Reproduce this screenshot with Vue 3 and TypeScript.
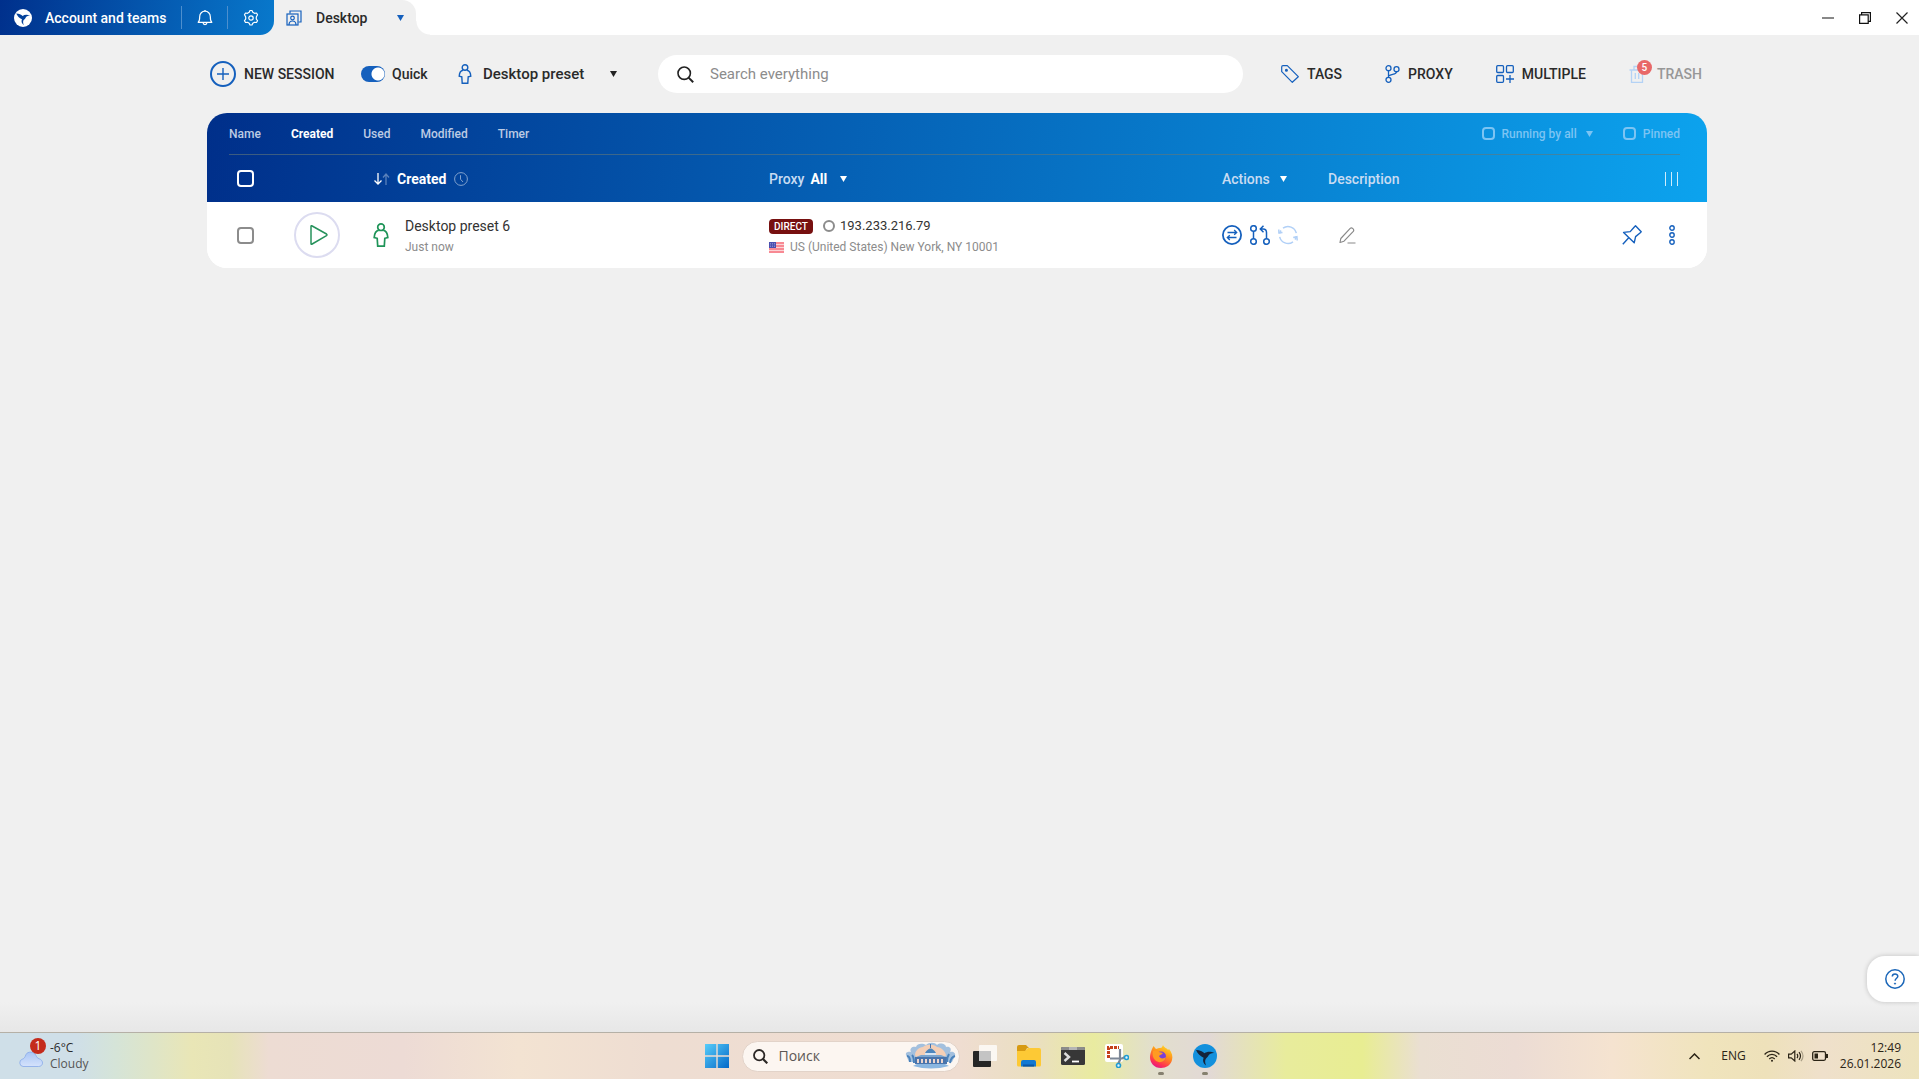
<script setup lang="ts">
import { ref } from 'vue'

interface Session {
  id: number
  name: string
  when: string
  kind: string
  ip: string
  place: string
}

const sorts = ['Name', 'Created', 'Used', 'Modified', 'Timer']
const activeSort = ref('Created')
const quick = ref(true)
const query = ref('')
const preset = ref('Desktop preset')
const proxyFilter = ref('All')
const sessions: Session[] = [
  {
    id: 6,
    name: 'Desktop preset 6',
    when: 'Just now',
    kind: 'DIRECT',
    ip: '193.233.216.79',
    place: 'US (United States) New York, NY 10001',
  },
]
</script>

<template>
  <div class="app">
    <header class="titlebar">
      <div class="account">
        <button class="team" type="button">
          <svg width="18" height="18" viewBox="0 0 24 24">
            <circle cx="12" cy="12" r="12" fill="#fff" />
            <path d="M3 6c4 .2 6.500 1.200 8.500 3.200C14 7.500 17.500 7 21.500 9c-3-.2-5 .6-6 2.600-.8 2-2.700 2.400-3.200 4.400-.4 2 0 3.500.8 5.500-2.800-2-3.800-4.800-2.500-7.800C7 12 4.500 9.500 3 6z" fill="#04429c" />
          </svg>
          <span>Account and teams</span>
        </button>
        <button class="tool" type="button" aria-label="Notifications">
          <svg width="16" height="18" viewBox="0 0 16 18" fill="none" stroke="#fff" stroke-width="1.2">
            <path d="M1.2 13.3C2.8 12 2.700 10.500 2.700 7.500a5.300 5.300 0 0 1 10.600 0c0 3 0 4.500 1.500 5.800z" stroke-linejoin="round" />
            <path d="M6 13.500c.2 2.700 3.800 2.700 4 0M8 1v1.200" />
          </svg>
        </button>
        <button class="tool" type="button" aria-label="Settings">
          <svg width="16" height="18" viewBox="0 0 16 18" fill="none" stroke="#fff" stroke-width="1.2" stroke-linejoin="round">
            <path d="M6.200 3.300 7 1.500h2l.8 1.800 1.700 1 2-.3 1 1.800L13.300 8v2l1.200 1.700-1 1.800-2-.2-1.700 1L9 16H7l-.8-1.700-1.700-1-2 .2-1-1.800L2.700 10V8L1.500 5.800l1-1.800 2 .3z" />
            <circle cx="8" cy="9" r="2.2" />
          </svg>
        </button>
      </div>
      <button class="tab" type="button">
        <svg width="16" height="16" viewBox="0 0 16 16" fill="none" stroke="#1560bd" stroke-width="1.2">
          <path d="M4 3.500V1h11v11h-2.500" />
          <rect x="1" y="4" width="11" height="11" />
          <circle cx="6.500" cy="8" r="1.800" />
          <path d="M3 15c0-2.500 1.200-4 3.500-4s3.500 1.500 3.500 4" />
        </svg>
        <span class="tab-name">Desktop</span>
        <svg class="caret" width="7" height="6" viewBox="0 0 7 6"><path d="M0 0h7L3.500 6z" fill="#1560bd" /></svg>
      </button>
      <div class="windowbar">
        <button type="button" aria-label="Minimize">
          <svg width="12" height="12" viewBox="0 0 12 12"><path d="M0 6h12" stroke="#888" stroke-width="2" /></svg>
        </button>
        <button type="button" aria-label="Restore">
          <svg width="12" height="12" viewBox="0 0 12 12" fill="none" stroke="#111" stroke-width="1.2"><path d="M.6 2.800h8.600v8.600H.6zM2.600 2.800V.6h8.800v8.800H9.200" /></svg>
        </button>
        <button type="button" aria-label="Close">
          <svg width="12" height="12" viewBox="0 0 12 12" stroke="#222" stroke-width="1.2"><path d="M.5.5l11 11M11.500.5l-11 11" /></svg>
        </button>
      </div>
    </header>

    <main>
      <div class="content">
        <div class="toolbar">
          <button class="new" type="button">
            <svg width="26" height="26" viewBox="0 0 26 26" fill="none" stroke="#1560bd">
              <circle cx="13" cy="13" r="12" stroke-width="2" />
              <path d="M13 7v12M7 13h12" stroke-width="1.4" />
            </svg>
            <span>NEW SESSION</span>
          </button>
          <label class="quick">
            <input v-model="quick" type="checkbox" role="switch" />
            <span>Quick</span>
          </label>
          <label class="preset">
            <svg width="14" height="20" viewBox="0 0 14 20" fill="none" stroke="#1560bd" stroke-width="1.4">
              <circle cx="7" cy="3.500" r="2.800" />
              <path d="M5 6.300C2.600 6.800 1.400 8.500 1.200 12.200l2.600.6.4 6.400h5.600l.4-6.400 2.600-.6C12.600 8.500 11.400 6.800 9 6.300" />
            </svg>
            <select v-model="preset" aria-label="Preset">
              <option>Desktop preset</option>
            </select>
            <svg class="caret" width="7" height="6" viewBox="0 0 7 6"><path d="M0 0h7L3.500 6z" fill="#222" /></svg>
          </label>
          <label class="search">
            <svg width="17" height="17" viewBox="0 0 17 17" fill="none" stroke="#222" stroke-width="1.600">
              <circle cx="7.200" cy="7.200" r="6.200" />
              <path d="M11.600 11.600l4.600 4.600" stroke-width="2" />
            </svg>
            <input v-model="query" type="text" placeholder="Search everything" aria-label="Search everything" />
          </label>
          <nav class="links">
            <button type="button">
              <svg width="18" height="18" viewBox="0 0 18 18" fill="none" stroke="#1560bd" stroke-width="1.2" stroke-linejoin="round">
                <path d="M.7 4V2Q.7.7 2 .7h4.300l11 11-6 5.600L.7 6.700z" />
                <circle cx="5.400" cy="5.200" r=".9" fill="#1560bd" />
              </svg>
              <span>TAGS</span>
            </button>
            <button type="button">
              <svg width="15" height="18" viewBox="0 0 15 18" fill="none" stroke="#1560bd" stroke-width="1.3">
                <circle cx="3.500" cy="3.200" r="2.500" />
                <circle cx="11.500" cy="4.200" r="2.500" />
                <circle cx="3.500" cy="14.800" r="2.500" />
                <path d="M3.500 5.700v6.600M11.500 6.700c0 3-4.500 2.200-8 4.300" />
              </svg>
              <span>PROXY</span>
            </button>
            <button type="button">
              <svg width="18" height="18" viewBox="0 0 18 18" fill="none" stroke="#1560bd" stroke-width="1.3">
                <rect x=".7" y=".7" width="6.800" height="6.800" rx="1" />
                <rect x="10.500" y=".7" width="6.800" height="6.800" rx="1" />
                <rect x=".7" y="10.500" width="6.800" height="6.800" rx="1" />
                <path d="M14 10v8M10 14h8" />
              </svg>
              <span>MULTIPLE</span>
            </button>
            <button class="trash" type="button">
              <span class="bin">
                <svg width="16" height="18" viewBox="0 0 16 18" fill="none" stroke="#b4d2f5" stroke-width="1.3">
                  <path d="M.5 5h15M2.500 5v12.300h11V5M5 5V1.500h6V5M6.300 8v6M9.700 8v6" />
                </svg>
                <span class="badge">5</span>
              </span>
              <span>TRASH</span>
            </button>
          </nav>
        </div>

        <section class="card">
          <div class="filters">
            <div class="sorts">
              <button
                v-for="s in sorts"
                :key="s"
                type="button"
                :class="{ on: s === activeSort }"
                @click="activeSort = s"
              >{{ s }}</button>
            </div>
            <div class="flags">
              <label><input type="checkbox" /><span>Running by all</span>
                <svg class="caret" width="7" height="6" viewBox="0 0 7 6"><path d="M0 0h7L3.500 6z" fill="currentColor" /></svg>
              </label>
              <label><input type="checkbox" /><span>Pinned</span></label>
            </div>
          </div>

          <table>
            <colgroup>
              <col class="c-check" /><col class="c-play" /><col class="c-name" />
              <col class="c-proxy" /><col class="c-act" /><col /><col class="c-tail" />
            </colgroup>
            <thead>
              <tr>
                <th class="center"><input class="box" type="checkbox" aria-label="Select all" /></th>
                <th></th>
                <th>
                  <button class="line sort" type="button">
                    <svg width="18" height="12" viewBox="0 0 18 12" fill="none" stroke="#fff" stroke-width="1.3">
                      <path d="M5 0v11M1.500 7.500 5 11l3.500-3.500" />
                      <path d="M13 12V1M10 4.500 13 1l3 3.500" opacity=".35" />
                    </svg>
                    <b>Created</b>
                    <svg class="clock-icon" width="14" height="14" viewBox="0 0 14 14" fill="none" stroke="#fff" opacity=".5">
                      <circle cx="7" cy="7" r="6.400" />
                      <path d="M6.500 3.200V7.200l2.500 2.800" />
                    </svg>
                  </button>
                </th>
                <th>
                  <label class="line proxy">
                    <span>Proxy</span>
                    <select v-model="proxyFilter"><option>All</option></select>
                    <svg class="caret" width="7" height="6" viewBox="0 0 7 6"><path d="M0 0h7L3.500 6z" fill="#fff" /></svg>
                  </label>
                </th>
                <th>
                  <button class="line acts" type="button">
                    <span>Actions</span>
                    <svg class="caret" width="7" height="6" viewBox="0 0 7 6"><path d="M0 0h7L3.500 6z" fill="#fff" /></svg>
                  </button>
                </th>
                <th>Description</th>
                <th class="tail">
                  <button type="button" aria-label="Columns">
                    <svg width="14" height="14" viewBox="0 0 14 14" stroke="#fff" opacity=".8"><path d="M.5 0v14M6.500 0v14M12.500 0v14" /></svg>
                  </button>
                </th>
              </tr>
            </thead>
            <tbody>
              <tr v-for="row in sessions" :key="row.id">
                <td class="center"><input class="box" type="checkbox" :aria-label="'Select ' + row.name" /></td>
                <td>
                  <button class="play" type="button" aria-label="Start">
                    <svg width="18" height="20" viewBox="0 0 18 20" fill="none" stroke="#27925c" stroke-width="1.500" stroke-linejoin="round">
                      <path d="M1 1.500Q1 .3 2.200 1l14.300 8q1 .8 0 1.600L2.200 19Q1 19.700 1 18.500z" />
                    </svg>
                  </button>
                </td>
                <td>
                  <div class="who">
                    <svg width="16" height="24" viewBox="0 0 16 24" fill="none" stroke="#1e9458" stroke-width="1.700">
                      <circle cx="8" cy="4.200" r="3.300" />
                      <path d="M5.800 7.200C3 7.800 1.500 10 1.200 14.500l3 .8.500 7.800h6.600l.5-7.800 3-.8C14.500 10 13 7.800 10.200 7.200" />
                    </svg>
                    <div class="stack">
                      <span class="main">{{ row.name }}</span>
                      <span class="sub">{{ row.when }}</span>
                    </div>
                  </div>
                </td>
                <td>
                  <div class="stack">
                    <span class="main ip"><span class="kind">{{ row.kind }}</span><i class="ring"></i><span>{{ row.ip }}</span></span>
                    <span class="sub place">
                      <svg width="15" height="11" viewBox="0 0 15 11">
                        <rect width="15" height="11" fill="#fbd3d6" />
                        <path d="M0 1h15M0 4h15M0 7h15M0 10h15" stroke="#f8717e" stroke-width="1.500" />
                        <rect width="7" height="6" fill="#4a4fb0" />
                        <path d="M1 1.500h5M1 3h5M1 4.500h5" stroke="#a9abdf" stroke-width=".6" stroke-dasharray="1 1" />
                      </svg>
                      <span>{{ row.place }}</span>
                    </span>
                  </div>
                </td>
                <td>
                  <div class="icons">
                    <button type="button" aria-label="Change proxy">
                      <svg width="20" height="20" viewBox="0 0 20 20" fill="none" stroke="#1560bd" stroke-width="1.3">
                        <circle cx="10" cy="10" r="9.100" stroke-width="1.800" />
                        <path d="M5.500 7.500h9M12.200 5l2.500 2.500-2.500 2.300M14.500 12.500h-9M7.800 10.200l-2.500 2.300L7.800 15" />
                      </svg>
                    </button>
                    <button type="button" aria-label="Check proxy">
                      <svg width="20" height="20" viewBox="0 0 20 20" fill="none" stroke="#1560bd" stroke-width="1.500">
                        <circle cx="3.500" cy="3.500" r="2.800" />
                        <circle cx="3.500" cy="16.500" r="2.800" />
                        <circle cx="16.500" cy="16.500" r="2.800" />
                        <path d="M3.500 6.300v7.400M16.500 13.700V7.500q0-3.500-3.500-3.500h-2M13.500.8 10.300 4l3.200 3.200" />
                      </svg>
                    </button>
                    <button type="button" aria-label="Refresh" disabled>
                      <svg width="20" height="20" viewBox="0 0 20 20" fill="none" stroke="#b1d0f7" stroke-width="1.500">
                        <path d="M5 3.200a8.500 8.500 0 0 1 13.300 5M15 16.800A8.500 8.500 0 0 1 1.700 11.800" />
                        <path d="M.8 4.500.9 8l3.600-.5M19.200 15.500l-.3-3.800-3.700.8" />
                        <path d="M1.600 8.500a8.500 8.500 0 0 1 1.500-3M18.400 11.500a8.500 8.500 0 0 1-1.500 3" />
                      </svg>
                    </button>
                  </div>
                </td>
                <td>
                  <button class="edit" type="button" aria-label="Edit description">
                    <svg width="17" height="17" viewBox="0 0 17 17" fill="none" stroke="#8a8a8a" stroke-width="1.2" stroke-linejoin="round">
                      <path d="M1 15.500l.8-4L11.200 1.400q1.200-1 2.700.2 1.400 1.400.4 2.800L5 14.200zM8.500 16h8" />
                    </svg>
                  </button>
                </td>
                <td class="tail">
                  <div class="tailbox">
                    <button type="button" aria-label="Pin">
                      <svg width="20" height="20" viewBox="0 0 20 20" fill="none" stroke="#1560bd" stroke-width="1.4" stroke-linejoin="round">
                        <path d="M13.500.8l5.700 6-1.200 1.200-4.400 3.600-1.400 6.200L1.600 7.400l6.600-.8 3.900-4.400zM6.500 13 .8 19.200" />
                      </svg>
                    </button>
                    <button type="button" aria-label="More">
                      <svg width="6" height="20" viewBox="0 0 6 20" fill="none" stroke="#1560bd" stroke-width="1.4">
                        <circle cx="3" cy="3" r="2.200" /><circle cx="3" cy="10" r="2.200" /><circle cx="3" cy="17" r="2.200" />
                      </svg>
                    </button>
                  </div>
                </td>
              </tr>
            </tbody>
          </table>
        </section>
      </div>
      <button class="help" type="button" aria-label="Help">
        <svg width="20" height="20" viewBox="0 0 20 20" fill="none" stroke="#1a66b8" stroke-width="1.500">
          <circle cx="10" cy="10" r="9.200" />
          <path d="M7.300 7.600c0-3.600 5.500-3.400 5.500-.3 0 2-2.700 2-2.700 4.500" />
          <circle cx="10" cy="14.600" r=".6" fill="#1a66b8" stroke-width="1" />
        </svg>
      </button>
    </main>

    <footer class="taskbar">
      <div class="weather">
        <span class="cloud">
          <svg width="24" height="16" viewBox="0 0 24 16">
            <defs>
              <linearGradient id="cl" x1="0" y1="0" x2="0" y2="1"><stop offset="0" stop-color="#a9c6f6" /><stop offset="1" stop-color="#d5e2fb" /></linearGradient>
            </defs>
            <path d="M4 15.500a3.800 3.800 0 0 1-.5-7.400C5 7.500 6 6.500 7 3.500 8.500.3 15 0 17 4.500c.8 2 1.500 2.500 3 3.200 5 1.500 4.500 7.800-.5 7.800z" fill="url(#cl)" stroke="#86a8e8" stroke-width=".8" />
          </svg>
          <span class="alert">1</span>
        </span>
        <div class="temp"><span>-6°C</span><span class="cond">Cloudy</span></div>
      </div>

      <div class="dock">
        <button type="button" aria-label="Start">
          <svg width="24" height="24" viewBox="0 0 24 24">
            <defs>
              <linearGradient id="win" x1="0" y1="0" x2="1" y2="1"><stop offset="0" stop-color="#57cdfa" /><stop offset="1" stop-color="#0468c8" /></linearGradient>
            </defs>
            <path d="M0 0h11.300v11.300H0zM12.700 0H24v11.300H12.700zM0 12.700h11.300V24H0zM12.700 12.700H24V24H12.700z" fill="url(#win)" />
          </svg>
        </button>
        <label class="find">
          <svg width="15" height="15" viewBox="0 0 15 15" fill="none" stroke="#2b2725" stroke-width="1.800">
            <circle cx="6.200" cy="6.200" r="5.200" /><path d="M10 10l4.300 4.300" stroke-width="2.200" />
          </svg>
          <input type="text" placeholder="Поиск" aria-label="Поиск" />
          <svg width="52" height="28" viewBox="0 0 52 28">
            <path d="M1 13C0 10 4 9 6 10c-2-4 2-6 5-5 1-4 7-4 10-2 3-3 9-3 11 0 3-3 9-1 9 2 4-1 6 2 4 5 3-1 6 1 5 4l-3 6H4z" fill="#a3c0de" />
            <path d="M10 13c0-4 4-8 8-8 3-3 11-3 14 0 4 0 8 4 9 8l-3 6H13z" fill="#f4cfb6" />
            <path d="M20 11q5.500-9 11 0z" fill="#4d86bd" />
            <path d="M25 2h1v4h-1zM10 15h32v7H10z" fill="#4a74ab" />
            <path d="M20 11h11v3H20z" fill="#d8e6f4" />
            <path d="M12 19h28" stroke="#ecd5cd" stroke-width="4" stroke-dasharray="2 2" />
            <path d="M16 13l-5 2h30l-5-2z" fill="#7aa4ce" />
            <path d="M12 22h28l4 2q-18 5-36 0z" fill="#8ab6e0" />
            <path d="M2 14q3 0 3 6M7 13q2 2 2 8M50 14q-4 1-5 7M44 12q-2 3-2 8" stroke="#4a82bb" stroke-width="2" fill="none" />
          </svg>
        </label>
        <button type="button" aria-label="Task view">
          <svg width="24" height="24" viewBox="0 0 24 24">
            <rect x="0" y="7" width="18" height="16" rx="1" fill="#262626" />
            <rect x="6" y="1" width="18" height="16" rx="1" fill="#fff" opacity=".75" />
            <rect x="6" y="7" width="12" height="10" fill="#c4c4c4" />
          </svg>
        </button>
        <button type="button" aria-label="File Explorer">
          <svg width="24" height="24" viewBox="0 0 24 24">
            <path d="M0 3q0-2 2-2h7l3 3h-2L8 8H0z" fill="#d79a12" />
            <path d="M0 7h8l3-3h11q2 0 2 2v15q0 1.500-1.500 1.500h-21Q0 22.500 0 21z" fill="#fdc935" />
            <path d="M4 22.500V18q0-2 2-2h11q2 0 2 2v4.500z" fill="#1279d2" />
            <path d="M6 22.500v-2h11v2z" fill="#0a57a6" />
          </svg>
        </button>
        <button type="button" aria-label="Terminal">
          <svg width="24" height="24" viewBox="0 0 24 24">
            <rect y="3" width="24" height="18" rx="1.500" fill="#373737" />
            <path d="M0 6V4.500Q0 3 1.500 3H22.500Q24 3 24 4.500V6z" fill="#8c8c8c" />
            <path d="M8 3h8v3H8z" fill="#b5b5b5" />
            <path d="M3.500 9l4.500 4-4.500 4" fill="none" stroke="#ddd" stroke-width="2.400" />
            <path d="M11 17.500h7" stroke="#fff" stroke-width="1.800" />
          </svg>
        </button>
        <button type="button" aria-label="Snipping Tool">
          <svg width="24" height="24" viewBox="0 0 24 24">
            <rect width="18" height="18" rx="2" fill="#fff" />
            <path d="M3.500 14V3.500H14" fill="none" stroke="#c5411b" stroke-width="3" stroke-dasharray="3 1" />
            <path d="M15 5v11l-2 4M5 14.500h12l4-2" fill="none" stroke="#7c8797" stroke-width="2.200" />
            <circle cx="13.500" cy="21.500" r="2" fill="#dff3fc" stroke="#219cd2" stroke-width="1.600" />
            <circle cx="21.500" cy="13.500" r="2" fill="#dff3fc" stroke="#219cd2" stroke-width="1.600" />
          </svg>
        </button>
        <button class="running" type="button" aria-label="Firefox">
          <svg width="24" height="24" viewBox="0 0 24 24">
            <defs>
              <linearGradient id="ff" x1=".8" y1="0" x2=".3" y2="1"><stop offset="0" stop-color="#ffe226" /><stop offset=".45" stop-color="#ff8a1c" /><stop offset=".8" stop-color="#ff3350" /><stop offset="1" stop-color="#e31587" /></linearGradient>
            </defs>
            <path d="M3 5l1.500-3L7 5l3-1c2 0 3 0 4-3 1 3 4 3 5 5l1-1c3 4 4 7 3 11-1 5-6 8-11 8C5 24 1 19 1 13c0-3 1-5 2-8z" fill="url(#ff)" />
            <circle cx="12" cy="12.500" r="5" fill="#7a3fd8" />
            <path d="M4 7c3-1 5 0 6 1l4 1c-1 2-3 1.500-4 3 1 3 5 3 7 1-1 5-7 7-11 3-2-2-3-5-2-9z" fill="#ff9a22" />
          </svg>
        </button>
        <button class="running" type="button" aria-label="Browser">
          <svg width="24" height="24" viewBox="0 0 24 24">
            <circle cx="12" cy="12" r="12" fill="#1390dd" />
            <path d="M3 6c4 .2 6.500 1.200 8.500 3.200C14 7.500 17.500 7 21.500 9c-3-.2-5 .6-6 2.600-.8 2-2.700 2.400-3.200 4.400-.4 2 0 3.500.8 5.500-2.800-2-3.800-4.800-2.500-7.800C7 12 4.500 9.500 3 6z" fill="#14243c" />
          </svg>
        </button>
      </div>

      <div class="tray">
        <button type="button" aria-label="Hidden icons">
          <svg width="11" height="7" viewBox="0 0 11 7" fill="none" stroke="#2b2416" stroke-width="1.500"><path d="M.5 6l5-5 5 5" /></svg>
        </button>
        <span class="lang">ENG</span>
        <div class="status">
          <svg width="16" height="12" viewBox="0 0 16 12" fill="none" stroke="#2b2416" stroke-width="1.3">
            <path d="M.6 4.500c4-4.500 10.800-4.500 14.800 0M2.900 6.800c3-3.200 7.200-3.200 10.200 0M5.300 9c1.700-1.800 3.700-1.800 5.400 0" />
            <circle cx="8" cy="10.700" r="1" fill="#2b2416" stroke="none" />
          </svg>
          <svg width="16" height="12" viewBox="0 0 16 12" fill="none" stroke="#2b2416" stroke-width="1.2">
            <path d="M.6 4.200h2.600L6.800 1v10L3.200 7.800H.6zM9 3.800q1.500 2.200 0 4.400M11 2.200q3 3.800 0 7.600" />
            <path d="M13 .8q4 5.200 0 10.400" opacity=".35" />
          </svg>
          <svg width="17" height="10" viewBox="0 0 17 10" fill="none" stroke="#2b2416" stroke-width="1.3">
            <rect x=".7" y=".7" width="12.800" height="8.600" rx="1.500" /><path d="M15 3v4" stroke-width="2" /><path d="M2.500 2.500H6v5H2.500z" fill="#2b2416" stroke="none" />
          </svg>
        </div>
        <div class="clock"><span>12:49</span><span>26.01.2026</span></div>
      </div>
    </footer>
  </div>
</template>

<style>
body {
  background: #f0f0f0;
}
</style>

<style scoped>
.app {
  min-height: 100vh;
  display: flex;
  flex-direction: column;
  background: #f0f0f0;
  color: #2a2a2a;
  font: 500 14px/18px Roboto, "Open Sans", sans-serif;
}
button,
input,
select {
  font: inherit;
  color: inherit;
  background: none;
  border: 0;
  padding: 0;
  margin: 0;
  outline: 0;
}
button {
  display: flex;
  align-items: center;
}
select {
  appearance: none;
}
svg {
  display: block;
  flex: none;
}

/* title bar */
.titlebar {
  height: 35px;
  display: flex;
  background: #fff;
}
.account {
  width: 274px;
  display: flex;
  align-items: center;
  background: linear-gradient(100deg, #00308c, #0879cc);
  border-bottom-right-radius: 14px;
  color: #fff;
  position: relative;
}
.titlebar::before {
  content: "";
  position: absolute;
  width: 290px;
  height: 35px;
  background: #f0f0f0;
}
.team {
  width: 181px;
  padding-left: 14px;
  gap: 13px;
}
.tool {
  width: 46px;
  height: 23px;
  justify-content: center;
  border-left: 1px solid #4d8fce;
}
.tab {
  width: 142px;
  padding: 0 12px;
  background: #f0f0f0;
  border-radius: 14px 14px 0 0;
  position: relative;
}
.tab::after {
  content: "";
  position: absolute;
  left: 100%;
  bottom: 0;
  width: 14px;
  height: 14px;
  background: radial-gradient(circle at 100% 0, #fff 13px, #f0f0f0 14px);
}
.tab-name {
  margin-left: 14px;
}
.tab .caret {
  margin-left: auto;
}
.windowbar {
  margin-left: auto;
  padding-right: 11px;
  display: flex;
  gap: 25px;
}

/* page */
main {
  flex: 1;
  padding: 0 5px 0 0;
  position: relative;
  background: linear-gradient(#f0f0f0 97%, #e7e7e7);
}
.content {
  max-width: 1500px;
  margin: 0 auto;
}
.toolbar {
  height: 78px;
  display: flex;
  align-items: center;
}
.new {
  width: 154px;
  padding-left: 3px;
  gap: 8px;
}
.quick {
  width: 97px;
  display: flex;
  align-items: center;
  gap: 7px;
}
.quick input {
  appearance: none;
  width: 24px;
  height: 16px;
  border-radius: 8px;
  background: radial-gradient(circle at 8px 8px, #fff 6px, #9aa 7px);
}
.quick input:checked {
  background: radial-gradient(circle at 17px 8px, #fff 6px, #1560bd 7px);
}
.preset {
  width: 200px;
  display: flex;
  align-items: center;
  gap: 11px;
}
.preset select {
  width: 116px;
  font-size: 15px;
}
.search {
  flex: 1;
  height: 38px;
  padding: 0 19px;
  display: flex;
  align-items: center;
  gap: 16px;
  background: #fff;
  border-radius: 19px;
}
.search input {
  flex: 1;
  min-width: 0;
  font-weight: 400;
  font-size: 15px;
}
.search input::placeholder {
  color: #8c8c8c;
  opacity: 1;
}
.links {
  width: 464px;
  box-sizing: border-box;
  padding: 0 5px 0 38px;
  display: flex;
  justify-content: space-between;
}
.links button {
  gap: 8px;
}
.trash {
  color: #979797;
}
.bin {
  display: flex;
  position: relative;
  margin-right: 4px;
}
.badge {
  position: absolute;
  left: 8px;
  top: -5px;
  width: 15px;
  height: 15px;
  border-radius: 50%;
  background: #e86868;
  color: #fff;
  font-size: 10px;
  line-height: 15px;
  text-align: center;
}

/* session table */
.card {
  border-radius: 20px;
  overflow: hidden;
  background: linear-gradient(98deg, #002f8a, #0ca3ee) 0 0 / 100% 89px no-repeat #fff;
}
.filters {
  height: 41px;
  margin: 0 27px 0 22px;
  display: flex;
  justify-content: space-between;
  align-items: center;
  border-bottom: 1px solid rgba(100, 120, 120, 0.6);
  font-size: 12px;
}
.sorts {
  display: flex;
  gap: 30px;
  color: #bccbe4;
}
.sorts .on {
  color: #fff;
  font-weight: 700;
}
.flags {
  display: flex;
  gap: 30px;
  color: #7cc4f3;
}
.flags label {
  display: flex;
  align-items: center;
  gap: 7px;
}
.flags .caret {
  margin: 0 0 0 2px;
}
.flags input,
.box {
  appearance: none;
  box-sizing: border-box;
  width: 13px;
  height: 13px;
  border: 2px solid currentColor;
  border-radius: 4px;
}
.box {
  width: 17px;
  height: 17px;
  display: block;
  margin: 0 auto;
}
thead .box {
  border-color: #fff;
}
tbody .box {
  border-color: #8c8c8c;
}
table {
  width: 100%;
  border-collapse: collapse;
  table-layout: fixed;
}
.c-check {
  width: 77px;
}
.c-play {
  width: 79px;
}
.c-name {
  width: 396px;
}
.c-proxy {
  width: 453px;
}
.c-act {
  width: 106px;
}
.c-tail {
  width: 107px;
}
th {
  height: 47px;
  padding: 0 0 0 10px;
  text-align: left;
  font-weight: 500;
  color: #c8dcf2;
}
td {
  height: 66px;
  padding: 0 0 0 10px;
  background: #fff;
}
th.center,
td.center {
  padding: 0;
}
.line {
  display: flex;
  align-items: center;
}
.sort {
  gap: 6px;
}
.sort b,
.proxy select {
  color: #fff;
  font-weight: 700;
}
.clock-icon {
  margin-left: 2px;
}
.proxy {
  gap: 6px;
}
.proxy select {
  width: 24px;
}
.acts {
  gap: 10px;
}
.tail {
  padding: 0 28px 0 0;
}
.tail button {
  margin-left: auto;
}
.play {
  width: 46px;
  height: 46px;
  box-sizing: border-box;
  border: 2px solid #dcdcf0;
  border-radius: 50%;
  justify-content: center;
  padding-left: 3px;
}
.who {
  display: flex;
  align-items: center;
  gap: 16px;
}
.stack {
  display: flex;
  flex-direction: column;
  gap: 3px;
  padding-top: 3px;
}
.main {
  font-weight: 400;
  color: #333;
}
.sub {
  font-size: 12px;
  font-weight: 400;
  color: #8c8c8c;
}
.ip,
.place {
  display: flex;
  align-items: center;
}
.ip {
  font-size: 13px;
}
.kind {
  width: 44px;
  height: 15px;
  margin-right: 10px;
  border-radius: 4px;
  background: #771010;
  color: #fff;
  font-size: 10px;
  font-weight: 500;
  line-height: 15px;
  text-align: center;
}
.ring {
  width: 8px;
  height: 8px;
  margin-right: 5px;
  border: 2px solid #8c8c8c;
  border-radius: 50%;
}
.place {
  gap: 6px;
}
.icons {
  display: flex;
  gap: 8px;
}
.edit {
  margin-left: 11px;
}
.tailbox {
  display: flex;
  justify-content: flex-end;
  gap: 27px;
  padding-right: 4px;
}
.tailbox button {
  margin: 0;
}
.help {
  position: absolute;
  right: 0;
  bottom: 30px;
  width: 52px;
  height: 46px;
  padding-left: 18px;
  background: #fff;
  border-radius: 18px 0 0 18px;
  box-shadow: 0 0 5px rgba(0, 0, 0, 0.2);
}

/* taskbar */
.taskbar {
  height: 46px;
  display: grid;
  grid-template-columns: 1fr auto 1fr;
  align-items: center;
  border-top: 1px solid #b5b0a6;
  font: 400 12px/16px "Open Sans", "Noto Sans", sans-serif;
  background: linear-gradient(90deg, #cfdfe8 0, #cfdfe8 4%, #d5e4d8 6%, #e9e6b6 10%, #e6e3b8 12%, #eddcd3 14%, #eddbd5 21%, #f3e3d2 27%, #eeddd2 34%, #efddd1 50%, #eadfc0 54%, #e9eba0 57%, #e2dfcc 60%, #e2d9d6 63%, #e8ec9c 67%, #e8ed92 71%, #eadfd2 74%, #ecdcd4 79%, #f5e3d0 84%, #f0e4bc 89%, #eee1ba 92%, #efe0cb 95%, #ede3bd 100%);
}
.weather {
  display: flex;
  gap: 7px;
  padding-left: 19px;
}
.cloud {
  position: relative;
  padding-top: 11px;
}
.alert {
  position: absolute;
  left: 11px;
  top: -2px;
  width: 16px;
  height: 16px;
  border-radius: 50%;
  background: #c42b1c;
  color: #fff;
  text-align: center;
}
.temp {
  display: flex;
  flex-direction: column;
}
.cond {
  color: #555;
}
.dock {
  display: flex;
  align-items: center;
  gap: 20px;
  padding-left: 2px;
}
.dock > button {
  position: relative;
}
.find {
  width: 218px;
  height: 31px;
  box-sizing: border-box;
  margin: 0 -7px;
  padding: 0 2px 0 10px;
  display: flex;
  align-items: center;
  gap: 11px;
  background: #fcf6f1;
  border: 1px solid #e2d3c9;
  border-radius: 16px;
  font-size: 14px;
}
.find input {
  flex: 1;
  min-width: 0;
}
.find input::placeholder {
  color: #5c5855;
  opacity: 1;
}
.running::after {
  content: "";
  position: absolute;
  left: 9px;
  bottom: -7px;
  width: 6px;
  height: 3px;
  border-radius: 2px;
  background: #85806f;
}
.tray {
  display: flex;
  align-items: center;
  justify-content: flex-end;
  padding-right: 18px;
  color: #2b2416;
}
.lang {
  margin: 0 18px 0 21px;
}
.status {
  display: flex;
  align-items: center;
  gap: 8px;
  margin-right: 11px;
}
.clock {
  display: flex;
  flex-direction: column;
  text-align: right;
}
</style>
